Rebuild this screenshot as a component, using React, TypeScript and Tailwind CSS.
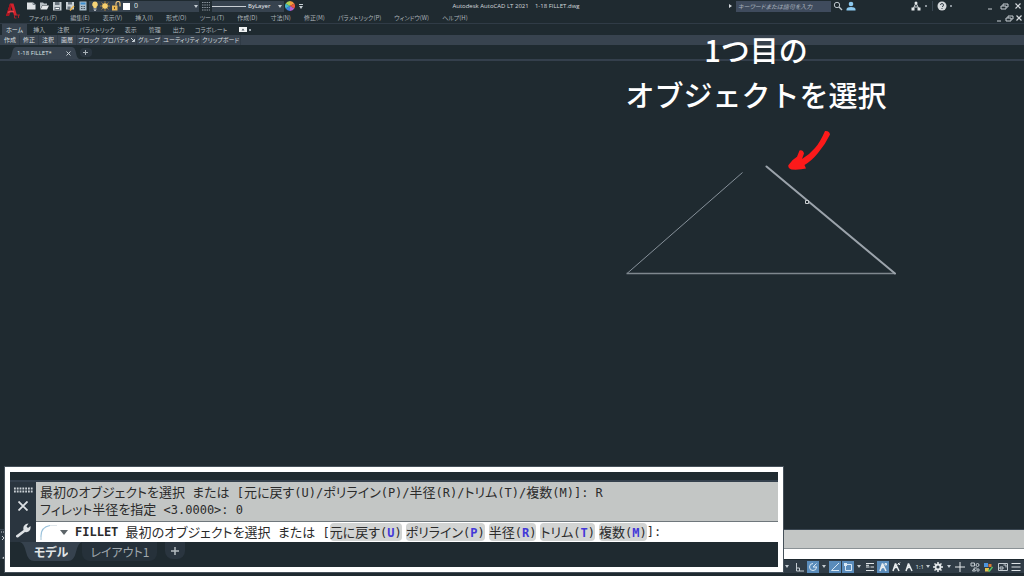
import type { ReactNode } from "react";

const menus = [
  "ファイル(F)", "編集(E)", "表示(V)", "挿入(I)", "形式(O)", "ツール(T)", "作成(D)",
  "寸法(N)", "修正(M)", "パラメトリック(P)", "ウィンドウ(W)", "ヘルプ(H)",
];

const ribbonTabs = ["ホーム", "挿入", "注釈", "パラメトリック", "表示", "管理", "出力", "コラボレート"];

const panels = [
  "作成", "修正", "注釈", "画層", "ブロック", "プロパティ", "グループ", "ユーティリティ", "クリップボード",
];

const options = [
  { label: "元に戻す", hotkey: "U" },
  { label: "ポリライン", hotkey: "P" },
  { label: "半径", hotkey: "R" },
  { label: "トリム", hotkey: "T" },
  { label: "複数", hotkey: "M" },
];

function Caret({ className = "" }: { className?: string }) {
  return (
    <svg viewBox="0 0 4 3" className={`w-1 h-[3px] shrink-0 fill-[#c5cdd3] ${className}`} aria-hidden="true">
      <path d="M0 0h4L2 3z" />
    </svg>
  );
}

function Icon({ children, className = "" }: { children: ReactNode; className?: string }) {
  return (
    <svg viewBox="0 0 10 10" className={`size-[10px] shrink-0 ${className}`} fill="none" aria-hidden="true">
      {children}
    </svg>
  );
}

// Latin runs are set in the monospaced face, kana and kanji in the CJK one
function ConsoleText({ text }: { text: string }) {
  return (
    <>
      {text.split(/([\x20-\x7e]+)/).map((part, i) =>
        i % 2 ? (
          <span key={i} className="font-['DejaVu_Sans_Mono',monospace] text-[12px]">{part}</span>
        ) : (
          part
        )
      )}
    </>
  );
}

function Logo() {
  return (
    <button aria-label="アプリケーション" className="w-[22px] shrink-0 flex justify-center">
      <svg viewBox="0 0 20 22" className="w-5 h-[22px]" fill="none">
        <path d="M5 16 9 3.500h3.500L16 15.500h-3L10.500 6.500 8 16z" fill="#d3232d" />
        <path d="M5 16 9 3.500 10.500 6.500 8 16z" fill="#a81520" />
        <path d="M7 11.500q3-1.500 6-.5v1.500q-3-.8-6.500.8z" fill="#e8434a" />
        <path d="M13.500 15v3h2M16 15h3M17.500 15v3" stroke="#a3222a" />
      </svg>
    </button>
  );
}

function QuickAccess() {
  return (
    <div className="flex items-center h-3">
      <div className="flex items-center gap-[3px] pl-1">
        <button aria-label="新規作成">
          <Icon><path d="M1 1.500h6l2.500 2v5H1z" fill="#dfe3e6" /><path d="M7 1.500v2h2.500" stroke="#79838c" /></Icon>
        </button>
        <button aria-label="開く">
          <Icon><path d="M1 8.500v-7h3l1 1h3v1.500H3.500z" fill="#b9c0c5" /><path d="M3.500 4.500h6.500l-2 4H1.500z" fill="#e6e9eb" /></Icon>
        </button>
        <button aria-label="上書き保存">
          <Icon><path d="M1 1h8.500v8.500H1z" fill="#c9d0d5" /><path d="M3 1h4.500v3H3zM2.500 6h5.500v3.500H2.500z" fill="#6a757f" /><path d="M3.500 7.500h3.500" stroke="#fff" /></Icon>
        </button>
        <button aria-label="名前を付けて保存">
          <Icon><path d="M1 1h8v7.500H1z" fill="#c9d0d5" /><path d="M3 1h4v2.500H3zM2.500 5.500h3v3h-3z" fill="#6a757f" /><path d="m5 9.500 4-4.500" stroke="#e9b34b" strokeWidth="1.500" /></Icon>
        </button>
        <button aria-label="印刷">
          <Icon><path d="M1.500.5h7v9h-7z" fill="#a9bccb" /><path d="M2.500 1.500h5v2h-5z" fill="#3d8fd0" /><path d="M3 5.500h4M3 7.500h4" stroke="#46525f" strokeDasharray="1 .5" /></Icon>
        </button>
      </div>
      <div className="ml-px w-[110px] h-[11px] px-px flex items-center bg-[#37434f]">
        <Icon><path d="M5 .5a3 3 0 0 0-1.500 5.500v1h3V6A3 3 0 0 0 5 .5z" fill="#f6d376" /><path d="M3.500 8h3M4 9.300h2" stroke="#c9ced2" /></Icon>
        <Icon><path d="M5 0v10M0 5h10M1.500 1.500l7 7M8.500 1.500l-7 7" stroke="#b98a3e" strokeWidth=".8" /><circle cx="5" cy="5" r="2.800" fill="#f9cf6c" /></Icon>
        <Icon className="ml-px"><path d="M1 4.500h5.500v5H1z" fill="#eab956" /><path d="M5 4.500V2.500a2 2 0 0 1 4 0v3" stroke="#e8c27a" strokeWidth="1.200" /><path d="M3.500 6v2" stroke="#70541f" /></Icon>
        <span className="ml-0.5 size-[7px] bg-white" />
        <select aria-label="画層" className="ml-1 flex-1 appearance-none text-[7px] leading-[10px] text-[#dfe3e6]">
          <option>0</option>
        </select>
        <Caret />
      </div>
      <button aria-label="線種パターン">
        <Icon className="ml-0.5"><path d="M1 1.500h8M1 4h8M1 6.500h8M1 9h8" stroke="#8b959e" strokeDasharray="1.500 .8" /></Icon>
      </button>
      <div className="ml-px w-[72px] h-[11px] pr-0.5 flex items-center bg-[#37434f]">
        <span className="w-[34px] h-px bg-[#c9cfd4]" />
        <select aria-label="線種" className="ml-0.5 flex-1 appearance-none text-[6px] leading-[10px] text-[#e4e8ea]">
          <option>ByLayer</option>
        </select>
        <Caret />
      </div>
      <button aria-label="色" className="ml-px">
        <Icon>
          <path d="M5 5V0a5 5 0 0 1 4.300 2.500z" fill="#f09a3e" />
          <path d="M5 5l4.300-2.500a5 5 0 0 1 0 5z" fill="#e9573f" />
          <path d="M5 5l4.300 2.500A5 5 0 0 1 5 10z" fill="#b45fd0" />
          <path d="M5 5v5A5 5 0 0 1 .7 7.500z" fill="#3f7fe0" />
          <path d="M5 5 .7 7.500a5 5 0 0 1 0-5z" fill="#45b7c9" />
          <path d="M5 5 .7 2.500A5 5 0 0 1 5 0z" fill="#a9cf55" />
        </Icon>
      </button>
      <button aria-label="クイックアクセスのカスタマイズ" className="ml-1 flex flex-col items-center gap-px">
        <span className="w-1 h-px bg-[#c5cdd3]" />
        <Caret />
      </button>
    </div>
  );
}

function WindowButtons({ className = "" }: { className?: string }) {
  return (
    <div className={`flex items-center ${className}`}>
      <button aria-label="最小化"><Icon><path d="M3 8h4" stroke="#c8ced3" /></Icon></button>
      <button aria-label="元に戻す"><Icon><path d="M2 5h5v3H2zM4 5V3h5v3H7" stroke="#c8ced3" /></Icon></button>
      <button aria-label="閉じる"><Icon><path d="m2.500 2.500 5 5m0-5-5 5" stroke="#d5dade" strokeWidth="1.200" /></Icon></button>
    </div>
  );
}

function Header() {
  return (
    <header className="flex h-[23px] text-[6px] leading-[10px]">
      <Logo />
      <div className="flex-1 flex flex-col">
        <div className="flex items-center h-3 pr-px">
          <QuickAccess />
          <p className="flex-1 text-center font-['Open_Sans',sans-serif] text-[#d4d9dd] whitespace-pre">
            Autodesk AutoCAD LT 2021{"    "}1-18 FILLET.dwg
          </p>
          <svg viewBox="0 0 3 4" className="w-[3px] h-1 fill-[#d5dade]" aria-hidden="true"><path d="M0 0v4l3-2z" /></svg>
          <input
            aria-label="検索"
            placeholder="キーワードまたは語句を入力"
            className="ml-1 w-[95px] h-[11px] px-0.5 bg-[#3f4b5d] font-['Noto_Sans_CJK_JP',sans-serif] [font-feature-settings:'palt'] text-[6px] italic placeholder:text-[#aab3bd]"
          />
          <button aria-label="検索実行" className="ml-0.5">
            <Icon><circle cx="4" cy="4" r="2.700" stroke="#bcc4ca" /><path d="m6 6 3 3" stroke="#bcc4ca" strokeWidth="1.400" /></Icon>
          </button>
          <button aria-label="サインイン" className="ml-[3px]">
            <Icon><circle cx="5" cy="3" r="2.300" fill="#8cc9ef" /><path d="M.5 9.500V8Q1 6 5 6t4.500 2v1.500z" fill="#8cc9ef" /></Icon>
          </button>
          <button aria-label="Autodesk App Store" className="ml-[55px] flex items-center gap-1">
            <Icon><path d="M5 2 2 8M5 2l3 6M3.500 6h3" stroke="#d9dee1" /><circle cx="5" cy="2" r="1.500" fill="#e3e7e9" /><path d="M.5 6.500h3v3h-3zM6.500 6.500h3v3h-3z" fill="#e3e7e9" /></Icon>
            <span className="size-0.5 rounded-full bg-[#aeb6bc]" />
          </button>
          <span className="ml-[5px] w-px h-[10px] bg-[#3a4651]" />
          <button aria-label="ヘルプ" className="ml-1 flex items-center gap-[3px]">
            <Icon><circle cx="5" cy="5" r="4.500" fill="#d5d9dc" /><path d="M3.500 4q0-1.500 1.500-1.500T6.500 4 5 5.700M5 7v1" stroke="#39444f" /></Icon>
            <span className="size-0.5 rounded-full bg-[#aeb6bc]" />
          </button>
          <WindowButtons className="ml-[33px] gap-1" />
        </div>
        <div className="flex items-center h-[11px] pl-[7px]">
          <nav className="flex-1 flex gap-[13px] font-['Noto_Sans_CJK_JP',sans-serif] [font-feature-settings:'palt'] text-[#aab2b8]">
            {menus.map((m) => (
              <button key={m} className="whitespace-nowrap">{m}</button>
            ))}
          </nav>
          <WindowButtons />
        </div>
      </div>
    </header>
  );
}

function isKanji(label: string) {
  return label.length === 2;
}

function Ribbon() {
  return (
    <div className="border-t border-[#303b46] font-['Noto_Sans_CJK_JP',sans-serif] [font-feature-settings:'palt'] text-[6px] leading-[10px]">
      <div className="flex items-center h-[11px] pl-0.5 text-[#aeb6bc]">
        {ribbonTabs.map((t, i) => (
          <button
            key={t}
            className={`h-full whitespace-nowrap ${isKanji(t) ? "px-[6px]" : "px-1"} ${i === 0 ? "bg-[#38434f] text-[#dfe3e6]" : ""}`}
          >
            {t}
          </button>
        ))}
        <button aria-label="リボン表示切替" className="ml-2 flex items-center gap-0.5">
          <svg viewBox="0 0 8 5" className="w-2 h-[5px]"><path d="M0 0h8v5H0z" fill="#f1f3f4" /><path d="M2.500 3.500h3L4 1.500z" fill="#4a5560" /></svg>
          <span className="size-0.5 rounded-full bg-[#c5cdd3]" />
        </button>
      </div>
      <div className="flex items-center h-[10px] bg-[#38434f] pl-px text-[#d3d9dd]">
        {panels.map((p) => (
          <button
            key={p}
            className={`h-full flex items-center gap-0.5 border-r border-[#303b46] whitespace-nowrap ${isKanji(p) ? "px-[3px]" : "px-px"}`}
          >
            {p}
            {p === "プロパティ" && (
              <svg viewBox="0 0 4 4" className="size-1" fill="none" aria-hidden="true"><path d="m0 0 3.500 3.500M3.500 1v2.500H1" stroke="#c5cdd3" /></svg>
            )}
          </button>
        ))}
      </div>
    </div>
  );
}

function FileTabs() {
  return (
    <div className="flex items-end h-4 border-b-2 border-[#343f4c] pl-2 text-[6px] leading-3 font-['Open_Sans',sans-serif]">
      <div className="flex items-end h-[13px]">
        <svg viewBox="0 0 8 12" className="w-2 h-3 fill-[#38434f]" aria-hidden="true"><path d="M0 12Q3 12 4 6T8 0v12z" /></svg>
        <div className="h-3 flex items-center gap-[14px] px-px bg-[#38434f] text-[#dfe3e6]">
          <button>1-18 FILLET*</button>
          <button aria-label="閉じる">
            <svg viewBox="0 0 5 5" className="size-[5px]" fill="none"><path d="m.5.5 4 4m0-4-4 4" stroke="#c5cdd3" /></svg>
          </button>
        </div>
        <svg viewBox="0 0 8 12" className="w-2 h-3 fill-[#38434f]" aria-hidden="true"><path d="M0 0Q3 0 4 6t4 6H0z" /></svg>
      </div>
      <button aria-label="新しいタブ" className="mb-0.5 w-3 h-[9px] rounded-sm bg-[#2a353f] flex items-center justify-center">
        <svg viewBox="0 0 5 5" className="size-[5px]" fill="none"><path d="M2.500 0v5M0 2.500h5" stroke="#aab2b8" /></svg>
      </button>
    </div>
  );
}

function Drawing() {
  return (
    <svg viewBox="620 125 285 155" className="absolute left-[620px] top-[125px] w-[285px] h-[155px]" fill="none">
      <path d="M742.500 172.500 627 273.500" stroke="#87919a" />
      <path d="M626.500 273.500H895" stroke="#7f888e" strokeWidth="1.400" />
      <path d="M766.500 166.500 895 273.500" stroke="#9ba3ab" strokeWidth="2" strokeLinecap="round" />
      <path d="M805.500 200.500h3v3h-3z" stroke="#c9cdd0" fill="#1f2a30" />
      <path
        d="M825 131Q829.500 130.500 830 134.500 825 145 818 153 812 160.500 804.500 165L806 168.500Q800 170 791.500 169.500 788 168.500 788.300 165.300 792 159.500 797 156.700L799.500 150.500Q803 149.500 804 153.500L802 159Q809 155 815 148 820 142.500 825 131z"
        fill="#fc1a1a"
      />
    </svg>
  );
}

function Wrench({ className = "size-4" }: { className?: string }) {
  return (
    <svg viewBox="0 0 16 16" className={className} aria-hidden="true">
      <path d="M1 13.500 8.500 8Q7.500 4 11 2l2.500-.5-2 3 1.500 1.500 2.500-2Q16 8 13.500 9.500 11.500 10.500 10 10L3 15.500Q.5 16 1 13.500z" fill="#dde1e4" />
    </svg>
  );
}

function StatusButton({ label, active = false, children }: { label: string; active?: boolean; children: ReactNode }) {
  return (
    <button
      aria-label={label}
      className={`w-3 h-3 flex items-center justify-center ${active ? "bg-[#5a8cbb]" : ""}`}
    >
      <Icon>{children}</Icon>
    </button>
  );
}

function Person({ mark }: { mark?: string }) {
  return (
    <>
      <path d="M4.500 1.500 2 9M4.500 1.500 8 9M3 6.500 5 5l2 1.500" stroke="#e9edef" strokeWidth="1.500" />
      {mark && <path d={mark} stroke="#e9edef" />}
    </>
  );
}

function StatusBar() {
  const line = "#c4ccd2";
  return (
    <div className="h-[17px] pt-px flex items-start justify-end">
      <div className="flex items-center h-[13px] bg-[#303c46] pl-[46px] pr-0.5 gap-px">
        <Caret className="mr-1" />
        <StatusButton label="直交モード"><path d="M1.500 1v8H9M1.500 6h3v3" stroke={line} /></StatusButton>
        <StatusButton label="極トラッキング" active><path d="M8.500 5A3.500 3.500 0 1 1 5 1.500M5 5h4M5 5l3.500-3.500" stroke="#d8e8f5" /></StatusButton>
        <Caret className="mx-0.5" />
        <StatusButton label="オブジェクト スナップ トラッキング" active><path d="M9 1 1.500 8.500H9" stroke="#d8e8f5" /></StatusButton>
        <StatusButton label="オブジェクト スナップ" active><path d="M2.500 2.500h6v6h-6z" stroke="#d8e8f5" /><path d="M1 1h3v3H1z" fill="#d8e8f5" /></StatusButton>
        <Caret className="mx-0.5" />
        <StatusButton label="線の太さ"><path d="M1 1.500h8M1 5h3.500M5.500 5H9M1 8.500h8M1 3.300h3" stroke="#dfe4e7" /></StatusButton>
        <StatusButton label="注釈オブジェクト" active><Person mark="M7 1.500h1.500V3H7z" /></StatusButton>
        <StatusButton label="自動尺度"><Person mark="M6.500 3 9 .500M7 1l2 2" /></StatusButton>
        <StatusButton label="注釈の表示"><Person /></StatusButton>
        <button className="flex items-center gap-0.5 text-[6px] leading-[10px] text-[#dfe4e7] font-['Open_Sans',sans-serif]">
          1:1
          <Caret />
        </button>
        <button aria-label="ワークスペース" className="ml-0.5 flex items-center gap-1">
          <Icon><circle cx="5" cy="5" r="2.500" stroke="#e6eaec" strokeWidth="1.800" /><path d="M5 0v2M5 8v2M0 5h2M8 5h2M1.500 1.500l1.300 1.300M7.200 7.200l1.300 1.300M8.500 1.500 7.200 2.800M2.800 7.200 1.500 8.500" stroke="#e6eaec" strokeWidth="1.500" /></Icon>
          <Caret />
        </button>
        <span className="w-px" />
        <StatusButton label="注釈モニター"><path d="M5 0v10M0 5h10" stroke="#e6eaec" /></StatusButton>
        <span className="w-px" />
        <StatusButton label="オブジェクトを選択表示"><path d="M1 1h3.500v3H1zM4 6h3M2.500 9 4 6.500 5.500 9z" stroke={line} /><circle cx="7.500" cy="3" r="1.500" stroke={line} /><circle cx="8" cy="8" r="1.200" stroke={line} /></StatusButton>
        <StatusButton label="グラフィックス パフォーマンス"><path d="M1 1h4v4H1z" fill="#4d94dd" /><path d="M5.500 2h3v3h-3z" fill="#dc7a35" /><path d="M2 6h4v3.500H2z" fill="#e5c14c" /><path d="m5 7.500 1.500 1.500 3-4" stroke="#5ac06a" strokeWidth="1.300" /></StatusButton>
        <span className="w-px" />
        <StatusButton label="フルスクリーン表示"><path d="M.5 1.500h9v7h-9z" stroke={line} /><path d="M5.500 3h2.500v2.500M2 5h3v2H2z" stroke={line} /></StatusButton>
        <StatusButton label="カスタマイズ"><path d="M.5 1.500h9M.5 5h9M.5 8.500h9" stroke="#dfe4e7" /></StatusButton>
      </div>
    </div>
  );
}

function CommandZoom() {
  return (
    <section
      aria-label="コマンド ライン"
      className="absolute left-[5px] bottom-1 w-[778px] border-[5px] border-white bg-[#1f2a30] outline outline-[#46515a] pt-2 font-['Noto_Sans_CJK_JP',sans-serif] [font-feature-settings:'palt'] text-[13px]"
    >
      <div className="flex border-t-2 border-[#34404d]">
        <div className="w-[26px] shrink-0 bg-[#2a353f] flex flex-col items-center justify-between pt-[5px] pb-1">
          <svg viewBox="0 0 19 6" className="w-[19px] h-1.5" fill="none" aria-hidden="true">
            <path d="M0 1.500h19M0 4.500h19" stroke="#c9cfd4" strokeWidth="2" strokeDasharray="1.800 1" />
          </svg>
          <button aria-label="閉じる" className="mb-1">
            <Icon><path d="m.5.5 9 9m0-9-9 9" stroke="#dde1e4" strokeWidth="1.800" /></Icon>
          </button>
          <button aria-label="カスタマイズ"><Wrench /></button>
        </div>
        <div className="flex-1 text-[#2b2b2b]">
          <div className="bg-[#c3c6c5] pl-1 pt-0.5 pb-[3px] leading-4 border-b border-[#6f777c] whitespace-pre">
            <p><ConsoleText text="最初のオブジェクトを選択 または [元に戻す(U)/ポリライン(P)/半径(R)/トリム(T)/複数(M)]: R" /></p>
            <p><ConsoleText text="フィレット半径を指定 <3.0000>: 0" /></p>
          </div>
          <div className="h-5 flex items-center bg-white pl-1 leading-[18px] whitespace-pre">
            <svg viewBox="0 0 18 16" className="w-[18px] h-4" fill="none" aria-hidden="true">
              <path d="M1 16V12Q1 3 10 1.500" stroke="#9cc3dc" strokeWidth="1.200" />
              <path d="M10 1.500h7M1 16v-3" stroke="#dfe6ea" />
            </svg>
            <svg viewBox="0 0 8 5" className="ml-0.5 mr-[7px] w-2 h-[5px] fill-[#5c6468]" aria-hidden="true"><path d="M0 0h8L4 5z" /></svg>
            <b className="font-['DejaVu_Sans_Mono',monospace] text-[12px]">FILLET</b>
            <span><ConsoleText text=" 最初のオブジェクトを選択 または [" /></span>
            <span className="flex gap-1">
              {options.map((o) => (
                <button key={o.hotkey} className="h-[18px] rounded-sm bg-[#d2d4d3]">
                  {o.label}
                  <span className="font-['DejaVu_Sans_Mono',monospace] text-[12px]">
                    (<b className="text-[#4338d8]">{o.hotkey}</b>)
                  </span>
                </button>
              ))}
            </span>
            <ConsoleText text="]:" />
          </div>
        </div>
      </div>
      <div className="flex items-start h-[25px] pl-[10px] text-[12px] leading-[18px]">
        <svg viewBox="0 0 14 19" className="w-[14px] h-[19px] fill-[#36424e]" aria-hidden="true"><path d="M0 0h14v19Q8 19 6 10T0 0z" /></svg>
        <button className="h-[19px] bg-[#36424e] font-bold text-[#e1e5e7]">モデル</button>
        <svg viewBox="0 0 14 19" className="w-[14px] h-[19px] fill-[#36424e]" aria-hidden="true"><path d="M14 0H0v19Q6 19 8 10t6-10z" /></svg>
        <button className="h-[19px] px-2 rounded-b-lg bg-[#26313a] text-[#a0a8ae]">レイアウト1</button>
        <button aria-label="レイアウトを追加" className="ml-2 w-5 h-[17px] rounded-b-lg bg-[#2a353f] flex items-center justify-center">
          <Icon><path d="M5 1v8M1 5h8" stroke="#b4bbc0" strokeWidth="1.500" /></Icon>
        </button>
      </div>
    </section>
  );
}

export default function App() {
  return (
    <div className="relative min-h-screen flex flex-col overflow-hidden bg-[#1f2a30]">
      <Header />
      <Ribbon />
      <FileTabs />
      <main className="flex-1">
        <Drawing />
      </main>
      <div className="flex h-[30px] border-t border-[#3a4651]">
        <div className="w-3 pt-px flex flex-col items-start justify-between bg-[#2a353f]">
          <svg viewBox="0 0 6 10" className="w-1.5 h-[10px]" fill="none" aria-hidden="true">
            <path d="M1 1h5" stroke="#c9cfd4" strokeDasharray="1 1" />
            <path d="m2 5 4 4m0-4L2 9" stroke="#c9cfd4" />
          </svg>
          <Wrench className="ml-0.5 size-2" />
        </div>
        <div className="flex-1 flex flex-col">
          <div className="h-[19px] bg-[#c3c6c5] border-b border-[#8a9195]" />
          <div className="flex-1 bg-white" />
        </div>
      </div>
      <StatusBar />
      <h1 className="absolute left-[606px] top-[27px] w-[300px] text-center font-medium font-['Noto_Sans_CJK_JP',sans-serif] text-[29px] leading-[45px] text-white">
        1つ目の
        <br />
        オブジェクトを選択
      </h1>
      <CommandZoom />
    </div>
  );
}
